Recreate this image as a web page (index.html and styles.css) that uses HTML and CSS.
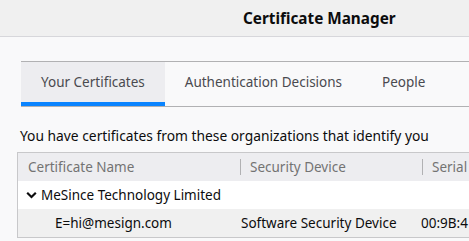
FILE: index.html
```html
<!DOCTYPE html>
<html lang="en">
<head>
    <meta charset="UTF-8">
    <title>Certificate Manager</title>
    <link rel="stylesheet" href="styles.css">
</head>
<body>
    <div class="titlebar">
        <h1>Certificate Manager</h1>
    </div>
    <div class="content">
        <div class="tabs">
            <div class="tab selected">Your Certificates</div>
            <div class="tab">Authentication Decisions</div>
            <div class="tab">People</div>
        </div>
        <p class="desc">You have certificates from these organizations that identify you</p>
        <div class="tree">
            <div class="row head">
                <div class="col name">Certificate Name</div>
                <div class="col device"><span class="split"></span>Security Device</div>
                <div class="col serial"><span class="split"></span>Serial</div>
            </div>
            <div class="row group">
                <div class="col name">
                    <svg class="twisty" width="11" height="10" viewBox="0 0 11 10">
                        <path d="M1.2 2.8 L5.5 7 L9.8 2.8" fill="none" stroke="#0c0c0d" stroke-width="2.2"/>
                    </svg>
                    MeSince Technology Limited
                </div>
            </div>
            <div class="row item">
                <div class="col name">E=hi@mesign.com</div>
                <div class="col device">Software Security Device</div>
                <div class="col serial">00:9B:4</div>
            </div>
        </div>
    </div>
</body>
</html>
```

FILE: styles.css
```css
body {
    margin: 0;
    font-family: "Noto Sans", "Open Sans", sans-serif;
    font-size: 13px;
    color: #0c0c0d;
    background: #f9f9fa;
    overflow: hidden;
}
.titlebar {
    height: 37px;
    background: #f0f0f0;
    border-bottom: 1px solid #d7d7db;
    display: flex;
    align-items: center;
    padding-left: 243px;
    box-sizing: border-box;
}
.titlebar h1 {
    margin: 0;
    font-size: 15.3px;
    font-weight: bold;
    white-space: nowrap;
}
.content {
    padding: 24px 0 0 17px;
    width: 452px;
}
.tabs {
    display: flex;
    margin-left: 4px;
    border-top: 1px solid #b1b1b3;
    border-bottom: 1px solid #b1b1b3;
}
.tab {
    height: 40px;
    padding: 0 20px;
    display: flex;
    align-items: center;
    color: #4a4a4f;
    font-size: 13.5px;
    border-bottom: 4px solid transparent;
    white-space: nowrap;
}
.tab.selected {
    background: #ededf0;
    border-bottom-color: #0a84ff;
}
.desc {
    margin: 19px 0 6px 3px;
    font-size: 13.8px;
    line-height: 20px;
    white-space: nowrap;
}
.tree {
    border: 1px solid #c8c8ca;
    border-right: none;
    background: #ffffff;
}
.row {
    display: flex;
    height: 28px;
    align-items: center;
    white-space: nowrap;
}
.row.head {
    background: #ededf0;
    color: #737373;
    align-items: stretch;
}
.row.item {
    background: #f0f0f0;
}
.col {
    display: flex;
    align-items: center;
    font-size: 13.5px;
    box-sizing: border-box;
}
.col.name {
    width: 222px;
    padding-left: 10px;
}
.col.device {
    width: 182px;
}
.head .col.device, .head .col.serial {
    position: relative;
    padding-left: 10px;
}
.split {
    position: absolute;
    left: 0;
    top: 6px;
    height: 16px;
    border-left: 1px solid #b1b1b3;
}
.group .col.name {
    padding-left: 8px;
}
.twisty {
    margin-right: 4px;
}
.item .col.name {
    padding-left: 37px;
    width: 223px;
}
.item .col.device {
    width: 180px;
}
```
